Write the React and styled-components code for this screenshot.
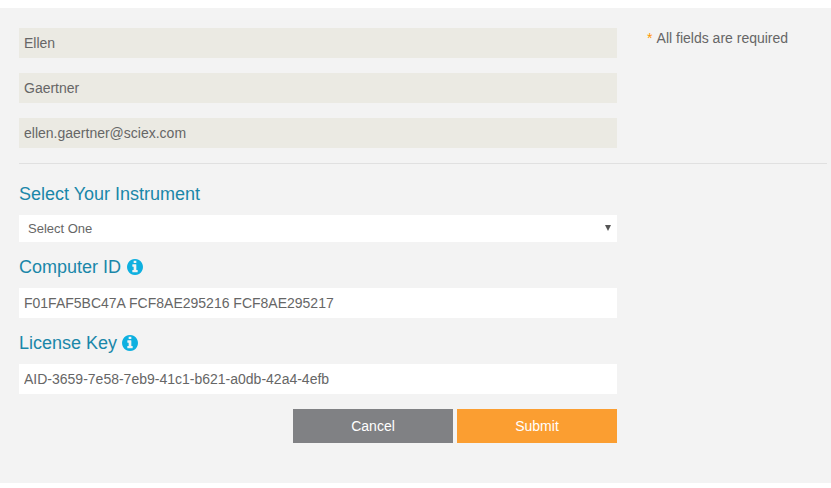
import React from "react";
import styled, { createGlobalStyle } from "styled-components";

const GlobalStyle = createGlobalStyle`
  body {
    margin: 0;
    padding-top: 8px;
    background-color: #fff;
    font-family: "Liberation Sans", Arial, sans-serif;
    font-size: 14px;
    color: #666;
  }
`;

const Panel = styled.form`
  height: 475px;
  box-sizing: border-box;
  padding: 20px 4px 0 19px;
  background-color: #f3f3f3;
`;

const TopRow = styled.div`
  display: flex;
  padding-bottom: 15px;
  border-bottom: 1px solid #e0e0e0;
`;

const Column = styled.div`
  width: 598px;
  display: flex;
  flex-direction: column;
`;

const NameFields = styled(Column)`
  gap: 15px;
`;

const Note = styled.p`
  margin: 2px 0 0 30px;
  line-height: 16px;
  color: #666;
`;

const Star = styled.span`
  margin-right: 1px;
  color: #ff9800;
`;

const Field = styled.input`
  width: 100%;
  height: 30px;
  box-sizing: border-box;
  padding: 0 5px;
  border: 0;
  border-radius: 0;
  outline: 0;
  font-family: inherit;
  font-size: 14px;
  color: #666;
  background-color: ${(p) => (p.$filled ? "#ebeae3" : "#fff")};
`;

const Label = styled.label`
  display: flex;
  align-items: center;
  gap: 6px;
  height: 22px;
  font-size: 18px;
  color: #1a87a9;
`;

const SelectLabel = styled(Label)`
  margin: 19px 0 10px;
`;

const IdLabel = styled(Label)`
  margin: 14px 0 10px;
`;

const KeyLabel = styled(Label)`
  margin: 14px 0 10px;
  gap: 5px;
`;

const InfoSvg = styled.svg`
  width: 16px;
  height: 16px;
  fill: #0eb0e0;
`;

const InfoIcon = () => (
  <InfoSvg viewBox="128 128 1536 1536">
    <path d="M1152 1376v-160q0-14-9-23t-23-9h-96v-512q0-14-9-23t-23-9h-320q-14 0-23 9t-9 23v160q0 14 9 23t23 9h96v320h-96q-14 0-23 9t-9 23v160q0 14 9 23t23 9h448q14 0 23-9t9-23zm-128-896v-160q0-14-9-23t-23-9h-192q-14 0-23 9t-9 23v160q0 14 9 23t23 9h192q14 0 23-9t9-23zm640 416q0 209-103 385.500t-279.500 279.500-385.500 103-385.500-103-279.500-279.500-103-385.500 103-385.500 279.500-279.500 385.500-103 385.500 103 279.500 279.500 103 385.500z" />
  </InfoSvg>
);

const SelectWrap = styled.div`
  position: relative;
  height: 27px;
`;

const Select = styled.select`
  width: 100%;
  height: 100%;
  padding: 0 9px;
  border: 0;
  border-radius: 0;
  outline: 0;
  appearance: none;
  font-family: inherit;
  font-size: 13px;
  color: #666;
  background-color: #fff;
`;

const Arrow = styled.span`
  position: absolute;
  top: 10px;
  right: 6px;
  border-style: solid;
  border-width: 6px 3px 0;
  border-color: #555 transparent transparent;
  pointer-events: none;
`;

const Actions = styled.div`
  display: flex;
  justify-content: flex-end;
  gap: 4px;
  margin-top: 15px;
`;

const Button = styled.button`
  width: 160px;
  height: 34px;
  padding: 0;
  border: 0;
  font-family: inherit;
  font-size: 14px;
  color: #fff;
  cursor: pointer;
  background-color: ${(p) => (p.$primary ? "#fb9e31" : "#808184")};
`;

export default function App() {
  return (
    <>
      <GlobalStyle />
      <Panel onSubmit={(e) => e.preventDefault()}>
        <TopRow>
          <NameFields>
            <Field $filled readOnly value="Ellen" />
            <Field $filled readOnly value="Gaertner" />
            <Field $filled readOnly value="ellen.gaertner@sciex.com" />
          </NameFields>
          <Note>
            <Star>*</Star> All fields are required
          </Note>
        </TopRow>

        <Column>
          <SelectLabel>Select Your Instrument</SelectLabel>
          <SelectWrap>
            <Select defaultValue="">
              <option value="">Select One</option>
            </Select>
            <Arrow />
          </SelectWrap>

          <IdLabel>
            Computer ID <InfoIcon />
          </IdLabel>
          <Field readOnly value="F01FAF5BC47A FCF8AE295216 FCF8AE295217" />

          <KeyLabel>
            License Key <InfoIcon />
          </KeyLabel>
          <Field readOnly value="AID-3659-7e58-7eb9-41c1-b621-a0db-42a4-4efb" />

          <Actions>
            <Button type="button">Cancel</Button>
            <Button $primary type="submit">Submit</Button>
          </Actions>
        </Column>
      </Panel>
    </>
  );
}
